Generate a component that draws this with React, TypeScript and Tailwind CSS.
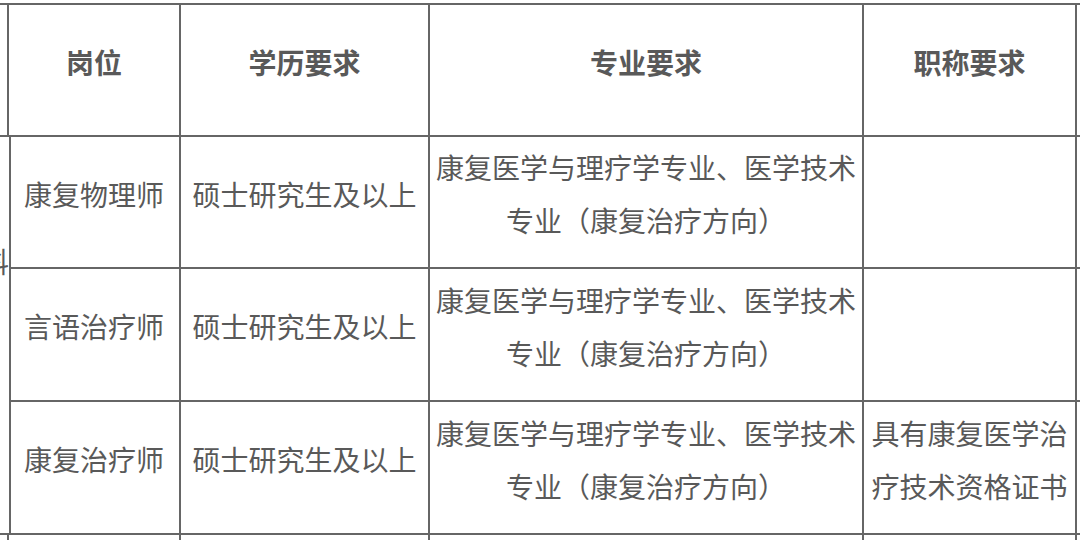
const FONT = { fontFamily: '"Noto Sans CJK SC", "Noto Sans", sans-serif' };

const rows = [
  { post: "康复物理师", title: null as string[] | null },
  { post: "言语治疗师", title: null as string[] | null },
  { post: "康复治疗师", title: ["具有康复医学治", "疗技术资格证书"] },
];

const cell =
  "border-r-2 border-b-2 border-[#666] flex flex-col items-center justify-center pb-4 text-center whitespace-nowrap";

const App = () => {
  return (
    <div className="w-[1080px] h-[540px] overflow-hidden bg-white text-[#595959]" style={FONT}>
      <div className="-ml-[91px] mt-[3px] w-max border-t-2 border-[#666] grid grid-cols-[100px_172px_249px_434px_213px_200px] grid-rows-[132px_132px_133px_133px_133px] text-[28px] leading-[53px]">
        {/* header */}
        <div className={cell}></div>
        <div className={cell + " font-bold"}>岗位</div>
        <div className={cell + " font-bold"}>学历要求</div>
        <div className={cell + " font-bold"}>专业要求</div>
        <div className={cell + " font-bold"}>职称要求</div>
        <div className={cell}></div>

        {/* merged left column, only the edge of it is visible */}
        <div className="row-span-3 border-r-2 border-b-2 border-[#666] flex flex-col items-end pt-[109px] leading-[30px] -mr-[2px]">
          <span>科</span>
        </div>

        {rows.map((r, i) => (
          <div key={i} className="contents">
            <div className={cell}>{r.post}</div>
            <div className={cell}>硕士研究生及以上</div>
            <div className={cell}>
              <span>康复医学与理疗学专业、医学技术</span>
              <span>专业（康复治疗方向）</span>
            </div>
            <div className={cell}>
              {r.title && (
                <>
                  <span>{r.title[0]}</span>
                  <span>{r.title[1]}</span>
                </>
              )}
            </div>
            <div className={cell}></div>
          </div>
        ))}

        {/* next row, cut off by the window */}
        <div className={cell}></div>
        <div className={cell}></div>
        <div className={cell}></div>
        <div className={cell}></div>
        <div className={cell}></div>
        <div className={cell}></div>
      </div>
    </div>
  );
};

export default App;
